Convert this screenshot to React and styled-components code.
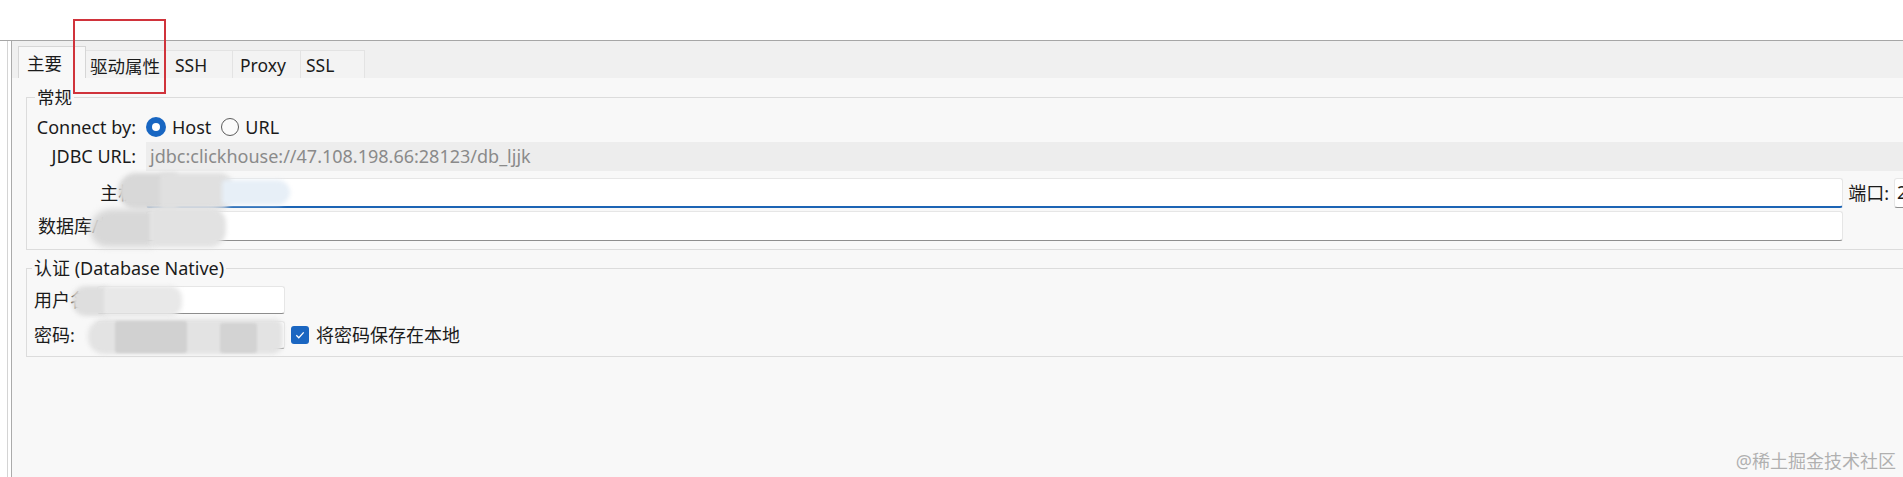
import React from "react";
import styled, { createGlobalStyle } from "styled-components";

const GlobalStyle = createGlobalStyle`
  html, body {
    margin: 0;
    padding: 0;
    background: #ffffff;
  }
  body {
    font-family: "Noto Sans", "Noto Sans CJK SC", sans-serif;
    font-size: 18px;
    color: #1b1b1b;
  }
  * {
    box-sizing: border-box;
  }
`;

const Page = styled.div`
  position: relative;
  width: 1903px;
  height: 477px;
  overflow: hidden;
  display: flex;
  flex-direction: column;
  background: #ffffff;
`;

const TopBar = styled.div`
  flex: none;
  height: 40px;
`;

const Frame = styled.div`
  flex: 1;
  display: flex;
  min-height: 0;
  border-top: 1px solid #a6a6a6;
  padding-left: 7px;
`;

const Shell = styled.div`
  flex: 1;
  display: flex;
  min-width: 0;
  border-left: 1px solid #d4d4d4;
  padding-left: 3px;
`;

const Panel = styled.div`
  flex: 1;
  min-width: 0;
  display: flex;
  flex-direction: column;
  overflow: hidden;
  border-left: 1px solid #ababab;
  background: #f8f8f8;
`;

const TabStrip = styled.div`
  flex: none;
  height: 37px;
  display: flex;
  align-items: flex-end;
  padding-left: 6px;
  background: #f0f0f0;
`;

const Tab = styled.div`
  width: ${(p) => p.$w}px;
  height: ${(p) => (p.$active ? 32 : 28)}px;
  display: flex;
  align-items: center;
  padding-left: ${(p) => p.$pl}px;
  padding-top: ${(p) => (p.$active ? 0 : 1)}px;
  font-size: 17.5px;
  white-space: nowrap;
  color: #1b1b1b;
  background: ${(p) => (p.$active ? "#f8f8f8" : "#f3f3f3")};
  border: 1px solid ${(p) => (p.$active ? "#d6d6d6" : "#e3e3e3")};
  border-bottom: none;
  border-left-width: ${(p) => (p.$first ? 1 : 0)}px;
`;

const Body = styled.div`
  flex: 1;
  width: 1988px;
  padding: 8px 0 0 14px;
`;

const Group = styled.fieldset`
  margin: 0 0 ${(p) => p.$after}px 0;
  padding: 0 5px ${(p) => p.$bottom}px 4px;
  border: 1px solid #dcdcdc;
  min-width: 0;
`;

const GroupTitle = styled.legend`
  margin-left: ${(p) => p.$indent}px;
  padding: 0 2px;
  line-height: 22px;
  font-size: ${(p) => p.$size}px;
  color: #1b1b1b;
`;

const MainGrid = styled.div`
  display: grid;
  grid-template-columns: 110px 1fr 41px 100px;
  column-gap: 5px;
  align-items: center;
  margin-top: 5px;
`;

const Wide = styled.div`
  grid-column: 2 / -1;
  height: ${(p) => p.$h}px;
  display: flex;
  align-items: center;
  margin-top: ${(p) => p.$mt || 0}px;
`;

const Cell = styled.div`
  height: 30px;
  margin-top: ${(p) => p.$mt}px;
  display: flex;
  align-items: center;
`;

const AuthGrid = styled.div`
  display: grid;
  grid-template-columns: 60px 188px auto;
  grid-template-rows: 28px 28px;
  column-gap: 6px;
  row-gap: 7px;
  align-items: center;
  margin-top: 7px;
`;

const Label = styled.span`
  flex: 1;
  white-space: nowrap;
  text-align: ${(p) => p.$align || "right"};
  padding: 0 ${(p) => p.$inset || 0}px;
  line-height: 24px;
`;

const Choices = styled.div`
  display: flex;
  align-items: center;
  gap: 10px;
`;

const Choice = styled.label`
  display: flex;
  align-items: center;
  gap: 6px;
  line-height: 24px;
`;

const Radio = styled.span`
  width: ${(p) => (p.$on ? 20 : 18)}px;
  height: ${(p) => (p.$on ? 20 : 18)}px;
  border-radius: 50%;
  display: flex;
  align-items: center;
  justify-content: center;
  background: ${(p) => (p.$on ? "#1866c2" : "#fbfbfb")};
  border: ${(p) => (p.$on ? "none" : "1px solid #5c5c5c")};

  &::after {
    content: "";
    display: ${(p) => (p.$on ? "block" : "none")};
    width: 8px;
    height: 8px;
    border-radius: 50%;
    background: #ffffff;
  }
`;

const ReadonlyField = styled.div`
  flex: 1;
  height: 100%;
  background: #ededed;
  color: #8a8a8a;
  padding-left: 4px;
  line-height: 29px;
  white-space: nowrap;
`;

const TextField = styled.div`
  flex: 1;
  height: 100%;
  background: #ffffff;
  border: 1px solid #e6e6e6;
  border-bottom: ${(p) => (p.$focus ? "2px solid #1c64b4" : "1px solid #8d8d8d")};
  border-radius: 3px;
  padding-left: 2px;
  line-height: 27px;
  white-space: nowrap;
  overflow: hidden;
`;

const SaveToggle = styled.label`
  display: flex;
  align-items: center;
  gap: 7px;
  line-height: 24px;
  white-space: nowrap;
`;

const CheckBox = styled.span`
  width: 18px;
  height: 18px;
  border-radius: 3px;
  background: #1a66c1;
  display: flex;
  align-items: center;
  justify-content: center;
`;

const Smear = styled.div`
  position: absolute;
  left: ${(p) => p.$x}px;
  top: ${(p) => p.$y}px;
  width: ${(p) => p.$w}px;
  height: ${(p) => p.$h}px;
  background: ${(p) => p.$c};
  border-radius: ${(p) => p.$r};
  filter: blur(${(p) => p.$b}px);
`;

const Annotation = styled.div`
  position: absolute;
  left: 73px;
  top: 19px;
  width: 93px;
  height: 75px;
  border: 2px solid #d0333b;
`;

const Watermark = styled.div`
  position: absolute;
  right: 7px;
  bottom: 4px;
  font-size: 18px;
  line-height: 24px;
  color: #b0b0b0;
  text-shadow: 0 0 1px #ffffff;
`;

const tabs = [
  { name: "主要", w: 68, pl: 8 },
  { name: "驱动属性", w: 80, pl: 4 },
  { name: "SSH", w: 67, pl: 9 },
  { name: "Proxy", w: 68, pl: 7 },
  { name: "SSL", w: 64, pl: 5 },
];

// redaction smears laid over the blurred values in the screenshot
const smears = [
  { x: 118, y: 173, w: 60, h: 36, c: "#d8d8d8", r: "18px 4px 4px 18px", b: 2 },
  { x: 160, y: 173, w: 72, h: 36, c: "#e0e0e0", r: "4px 12px 12px 4px", b: 2 },
  { x: 222, y: 180, w: 68, h: 25, c: "#e7eff7", r: "4px 14px 14px 4px", b: 2 },
  { x: 90, y: 209, w: 64, h: 38, c: "#d8d8d8", r: "22px 4px 4px 18px", b: 3 },
  { x: 150, y: 207, w: 76, h: 40, c: "#e2e2e2", r: "6px 16px 16px 6px", b: 2 },
  { x: 72, y: 286, w: 36, h: 30, c: "#dedede", r: "14px 4px 4px 14px", b: 2 },
  { x: 104, y: 286, w: 78, h: 30, c: "#e8e8e8", r: "4px 12px 12px 4px", b: 2 },
  { x: 88, y: 319, w: 195, h: 35, c: "#e3e3e3", r: "16px 8px 10px 16px", b: 2 },
  { x: 115, y: 321, w: 72, h: 32, c: "#d1d1d1", r: "3px", b: 1 },
  { x: 220, y: 323, w: 37, h: 30, c: "#d3d3d3", r: "3px", b: 1 },
];

function Check() {
  return (
    <svg width="12" height="12" viewBox="0 0 12 12">
      <polyline points="2.3,6.3 4.8,8.7 9.7,3.4" fill="none" stroke="#ffffff" strokeWidth="1.3" />
    </svg>
  );
}

export default function App() {
  return (
    <Page>
      <GlobalStyle />
      <TopBar />
      <Frame>
        <Shell>
          <Panel>
            <TabStrip>
              {tabs.map((t, i) => (
                <Tab key={t.name} $w={t.w} $pl={t.pl} $active={i === 0} $first={i === 0}>
                  {t.name}
                </Tab>
              ))}
            </TabStrip>
            <Body>
              <Group $after={7} $bottom={8}>
                <GroupTitle $indent={4} $size={17.5}>
                  常规
                </GroupTitle>
                <MainGrid>
                  <Label $inset={5}>Connect by:</Label>
                  <Wide $h={28}>
                    <Choices>
                      <Choice>
                        <Radio $on />
                        Host
                      </Choice>
                      <Choice>
                        <Radio />
                        URL
                      </Choice>
                    </Choices>
                  </Wide>
                  <Label $inset={5}>JDBC URL:</Label>
                  <Wide $h={29} $mt={1}>
                    <ReadonlyField>jdbc:clickhouse://47.108.198.66:28123/db_ljjk</ReadonlyField>
                  </Wide>
                  <Cell $mt={7}>
                    <Label>主机:</Label>
                  </Cell>
                  <Cell $mt={7}>
                    <TextField $focus />
                  </Cell>
                  <Cell $mt={7}>
                    <Label>端口:</Label>
                  </Cell>
                  <Cell $mt={7}>
                    <TextField>28123</TextField>
                  </Cell>
                  <Cell $mt={3}>
                    <Label $align="left" $inset={7}>
                      数据库/模式:
                    </Label>
                  </Cell>
                  <Cell $mt={3}>
                    <TextField />
                  </Cell>
                </MainGrid>
              </Group>
              <Group $after={0} $bottom={7}>
                <GroupTitle $indent={1} $size={18}>
                  认证 (Database Native)
                </GroupTitle>
                <AuthGrid>
                  <Label $align="left" $inset={3}>
                    用户名:
                  </Label>
                  <TextField />
                  <span />
                  <Label $align="left" $inset={3}>
                    密码:
                  </Label>
                  <TextField />
                  <SaveToggle>
                    <CheckBox>
                      <Check />
                    </CheckBox>
                    将密码保存在本地
                  </SaveToggle>
                </AuthGrid>
              </Group>
            </Body>
          </Panel>
        </Shell>
      </Frame>
      {smears.map((s, i) => (
        <Smear key={i} $x={s.x} $y={s.y} $w={s.w} $h={s.h} $c={s.c} $r={s.r} $b={s.b} />
      ))}
      <Annotation />
      <Watermark>@稀土掘金技术社区</Watermark>
    </Page>
  );
}
